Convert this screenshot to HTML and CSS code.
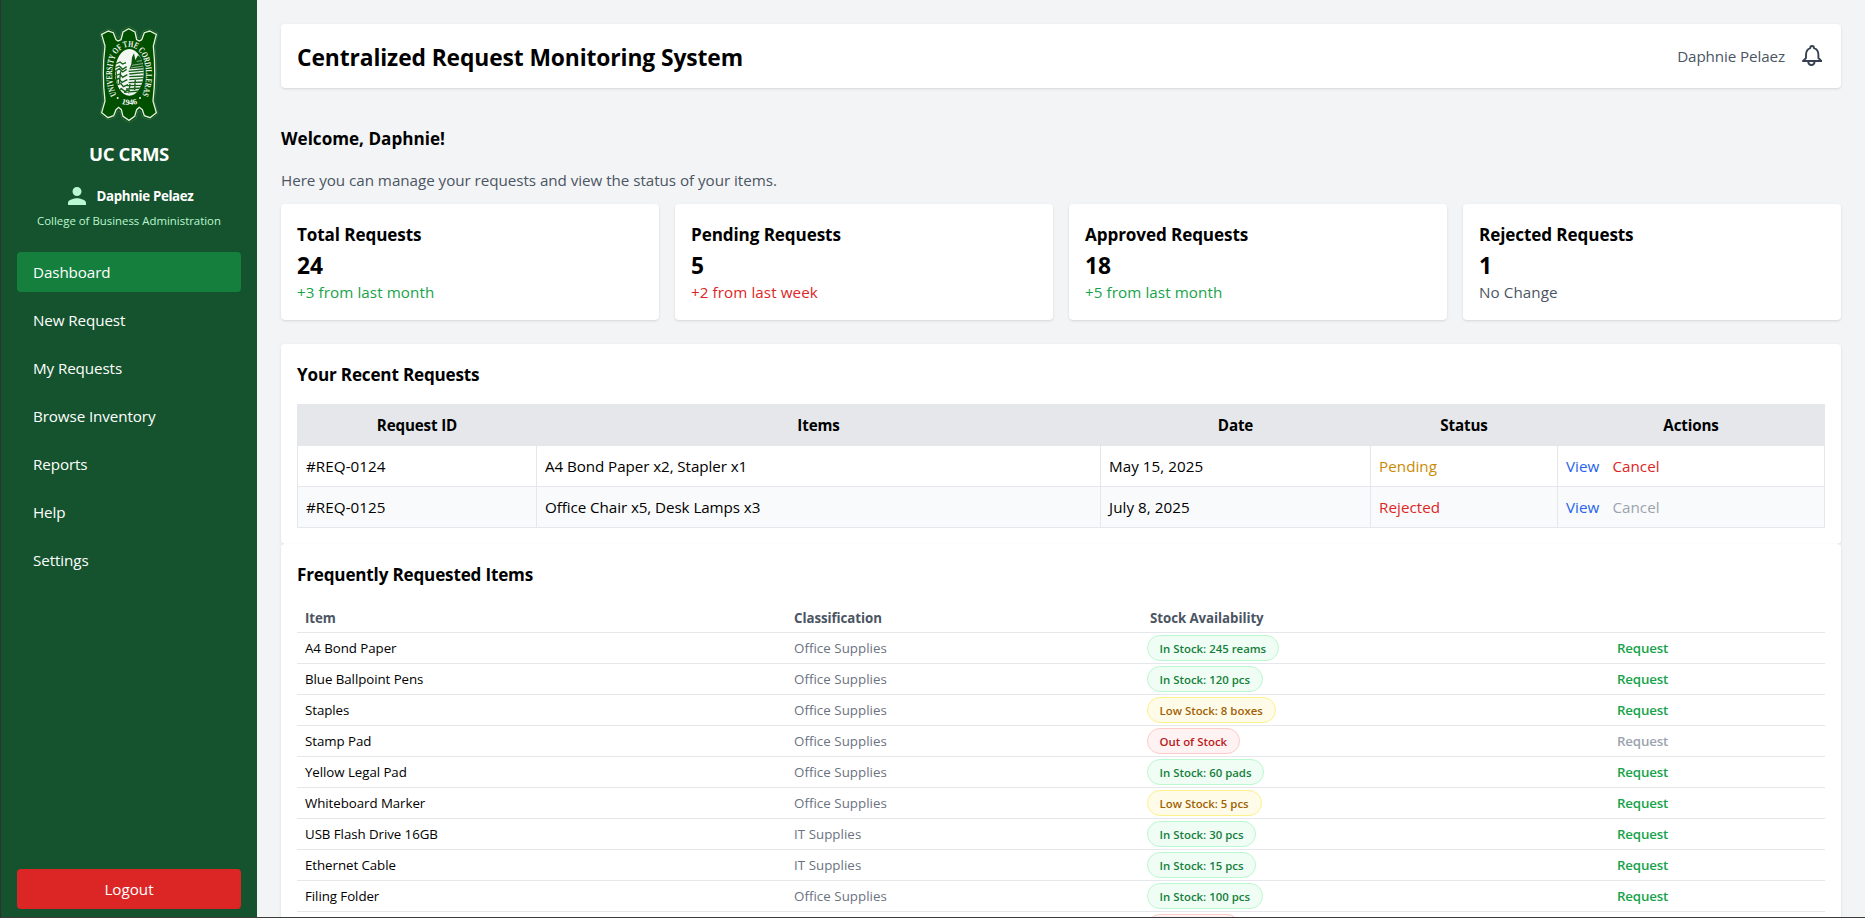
FILE: index.html
```html
<!DOCTYPE html>
<html lang="en">
<head>
<meta charset="utf-8">
<title>UC CRMS</title>
<link rel="stylesheet" href="styles.css">
</head>
<body>
<div class="app">
  <aside class="sidebar">
    <svg class="logo" viewBox="295 75 180 297">
      <defs>
        <path id="arc" d="M348 285 C329 250 330 190 350 160 C368 134 402 134 420 160 C440 190 441 250 424 285"/>
        <path id="arc2" d="M354 308 Q385 322 418 308"/>
        <clipPath id="oval"><ellipse cx="386" cy="217" rx="43" ry="70"/></clipPath>
      </defs>
      <path class="crest-edge" d="M298 99 L323 87 L342 93 L350 114 L357 114 L363 91 L384 79 L407 91 L411 114 L419 114 L427 93 L447 87 L472 99 L463 138 Q472 220 462 303 L472 342 L448 360 L426 352 L420 333 L412 333 L407 355 L385 368 L363 355 L358 333 L350 333 L344 352 L322 360 L298 342 L308 303 Q298 220 308 138 Z"/>
      <path class="crest" d="M303 103 L323 93 L338 98 L346 119 L352 123 L361 119 L367 96 L384 86 L403 96 L408 119 L416 123 L423 119 L431 98 L447 93 L467 103 L458 138 Q467 220 457 303 L467 338 L448 353 L431 347 L425 329 L416 322 L408 329 L402 349 L385 361 L367 349 L362 329 L354 322 L346 329 L339 347 L322 353 L303 338 L313 303 Q303 220 313 138 Z"/>
      <g clip-path="url(#oval)">
        <rect class="pale" x="340" y="140" width="90" height="150"/>
        <path class="dark" d="M386 208 L392 192 L394 172 L400 160 L404 180 L412 166 L430 180 L430 205 Z"/>
        <path class="hatch" d="M346 192 l12 -6 l8 6 l10 -4 M342 204 l14 -6 l10 10 l12 -8 M342 214 l14 -8 l10 10 l12 -8 M342 228 l16 -6 l8 10 l14 -8 M342 243 l12 -8 l10 12 l16 -8 M344 258 l16 -8 l8 10 l14 -6 M350 274 l12 -8 l10 8 l12 -4 M384 214 L430 210 M386 222 L430 218 M386 230 L430 228 M386 239 L430 236 M384 248 L430 246 M380 257 L428 256 M376 267 L424 264 M370 277 L416 273 M360 214 L356 250 M346 210 L350 262 M388 252 L384 280 M404 236 L402 270"/>
        <path class="sky" d="M390 204 L430 198 M394 196 L430 190 M408 184 L424 182"/>
      </g>
      <text class="crest-text"><textPath href="#arc" textLength="342" lengthAdjust="spacingAndGlyphs">UNIVERSITY OF THE CORDILLERAS</textPath></text>
      <text class="crest-text year"><textPath href="#arc2" textLength="50" startOffset="8" lengthAdjust="spacingAndGlyphs">1946</textPath></text>
      <circle class="pale" cx="351" cy="294" r="3"/><circle class="pale" cx="418" cy="294" r="3"/>
    </svg>
    <h1 class="brand">UC CRMS</h1>
    <div class="user">
      <svg class="user-icon" viewBox="4 4 16 16"><path d="M12 12c2.21 0 4-1.79 4-4s-1.79-4-4-4-4 1.79-4 4 1.79 4 4 4zm0 2c-2.67 0-8 1.34-8 4v2h16v-2c0-2.66-5.33-4-8-4z"/></svg>
      <span>Daphnie Pelaez</span>
    </div>
    <p class="college">College of Business Administration</p>
    <nav class="nav">
      <a class="active">Dashboard</a>
      <a>New Request</a>
      <a>My Requests</a>
      <a>Browse Inventory</a>
      <a>Reports</a>
      <a>Help</a>
      <a>Settings</a>
    </nav>
    <button class="logout">Logout</button>
  </aside>
  <main class="main">
    <header class="header">
      <h2 class="title">Centralized Request Monitoring System</h2>
      <div class="account">
        <span>Daphnie Pelaez</span>
        <svg class="bell" viewBox="10 14 24 24"><path d="M12.2 31 H32 M13.4 30.6 L16 28 V25 C16 21 18 19 20.2 18.2 C20.2 15.2 24 15.2 24 18.2 C26.4 19 28.4 21 28.4 25 V28 L31 30.6 M18.2 31.5 C18.4 36.2 24.4 36.2 24.6 31.5"/></svg>
      </div>
    </header>
    <h3 class="heading welcome">Welcome, Daphnie!</h3>
    <p class="intro">Here you can manage your requests and view the status of your items.</p>
    <section class="stats">
      <div class="card stat"><h3 class="heading">Total Requests</h3><p class="num">24</p><p class="up">+3 from last month</p></div>
      <div class="card stat"><h3 class="heading">Pending Requests</h3><p class="num">5</p><p class="down">+2 from last week</p></div>
      <div class="card stat"><h3 class="heading">Approved Requests</h3><p class="num">18</p><p class="up">+5 from last month</p></div>
      <div class="card stat"><h3 class="heading">Rejected Requests</h3><p class="num">1</p><p class="same">No Change</p></div>
    </section>
    <section class="card">
      <h3 class="heading">Your Recent Requests</h3>
      <table class="recent">
        <colgroup><col class="c-id"><col class="c-items"><col class="c-date"><col class="c-status"><col></colgroup>
        <thead><tr><th>Request ID</th><th>Items</th><th>Date</th><th>Status</th><th>Actions</th></tr></thead>
        <tbody>
          <tr><td>#REQ-0124</td><td class="desc">A4 Bond Paper x2, Stapler x1</td><td>May 15, 2025</td><td class="pending">Pending</td><td><a class="view">View</a><a class="cancel">Cancel</a></td></tr>
          <tr><td>#REQ-0125</td><td class="desc">Office Chair x5, Desk Lamps x3</td><td>July 8, 2025</td><td class="rejected">Rejected</td><td><a class="view">View</a><a class="cancel off">Cancel</a></td></tr>
        </tbody>
      </table>
    </section>
    <section class="card">
      <h3 class="heading">Frequently Requested Items</h3>
      <div class="items">
        <div class="row head"><span>Item</span><span>Classification</span><span>Stock Availability</span><span></span></div>
        <div class="row"><span>A4 Bond Paper</span><span class="class">Office Supplies</span><span><i class="pill in">In Stock: 245 reams</i></span><a class="req">Request</a></div>
        <div class="row"><span>Blue Ballpoint Pens</span><span class="class">Office Supplies</span><span><i class="pill in">In Stock: 120 pcs</i></span><a class="req">Request</a></div>
        <div class="row"><span>Staples</span><span class="class">Office Supplies</span><span><i class="pill low">Low Stock: 8 boxes</i></span><a class="req">Request</a></div>
        <div class="row"><span>Stamp Pad</span><span class="class">Office Supplies</span><span><i class="pill out">Out of Stock</i></span><a class="req off">Request</a></div>
        <div class="row"><span>Yellow Legal Pad</span><span class="class">Office Supplies</span><span><i class="pill in">In Stock: 60 pads</i></span><a class="req">Request</a></div>
        <div class="row"><span>Whiteboard Marker</span><span class="class">Office Supplies</span><span><i class="pill low">Low Stock: 5 pcs</i></span><a class="req">Request</a></div>
        <div class="row"><span>USB Flash Drive 16GB</span><span class="class">IT Supplies</span><span><i class="pill in">In Stock: 30 pcs</i></span><a class="req">Request</a></div>
        <div class="row"><span>Ethernet Cable</span><span class="class">IT Supplies</span><span><i class="pill in">In Stock: 15 pcs</i></span><a class="req">Request</a></div>
        <div class="row"><span>Filing Folder</span><span class="class">Office Supplies</span><span><i class="pill in">In Stock: 100 pcs</i></span><a class="req">Request</a></div>
        <div class="row"><span></span><span></span><span><i class="pill out blank"></i></span><span></span></div>
      </div>
    </section>
  </main>
</div>
</body>
</html>
```
FILE: styles.css
```css
* { box-sizing: border-box; margin: 0; padding: 0; }
body { font: 15.2px/24px "Open Sans", "Noto Sans", sans-serif; letter-spacing: -0.1px; color: #000; background: #fff; height: 918px; overflow: hidden; }
.app { display: flex; width: 1865px; height: 918px; border-left: 1px solid #303030; border-bottom: 1px solid #3c3c3c; overflow: hidden; background: #f3f4f6; }

.sidebar { width: 256px; flex: none; background: #14532d; color: #fff; padding: 25px 16px 8px; display: flex; flex-direction: column; align-items: center; }
.logo { width: 60px; height: 99px; flex: none; margin-right: 1px; }
.crest-edge { fill: #064d0b; stroke: #3b7a45; stroke-width: 2; }
.crest { fill: #005000; stroke: #e4efe4; stroke-width: 4; }
.pale { fill: #f2f7f2; }
.dark { fill: #0b560d; }
.hatch { fill: none; stroke: #175f1a; stroke-width: 4; }
.sky { fill: none; stroke: #cfe0cf; stroke-width: 2; }
.crest-text { font: bold 27px "Liberation Serif", serif; letter-spacing: 0; fill: #f2f7f2; }
.year { font-size: 24px; }
.brand { font-size: 18.6px; line-height: 28px; font-weight: 700; letter-spacing: -0.4px; margin-top: 16px; }
.user { display: flex; align-items: center; gap: 11px; margin: 18px 0 0 3px; font-size: 13.3px; line-height: 20px; font-weight: 700; letter-spacing: -0.35px; }
.user-icon { width: 18px; height: 18px; fill: #bbf7d0; }
.college { font-size: 11.4px; line-height: 16px; letter-spacing: 0; color: #bbf7d0; margin-top: 7px; }
.nav { align-self: stretch; display: flex; flex-direction: column; gap: 8px; margin-top: 23px; }
.nav a { padding: 8px 16px; border-radius: 4px; }
.nav .active { background: #15803d; }
.logout { margin-top: auto; width: 100%; height: 40px; border: 0; border-radius: 4px; background: #dc2626; color: #fff; font: inherit; }

.main { flex: 1; padding: 24px 24px 0; min-width: 0; }
.header, .card { background: #fff; border-radius: 4px; box-shadow: 0 1px 3px rgba(0,0,0,.1), 0 1px 2px -1px rgba(0,0,0,.1); }
.header { display: flex; justify-content: space-between; align-items: center; height: 64px; padding: 0 17px 0 16px; margin-bottom: 36px; }
.title { font-size: 22.8px; line-height: 32px; font-weight: 700; padding-top: 3px; }
.account { display: flex; align-items: center; gap: 15px; color: #4b5563; }
.bell { width: 24px; height: 24px; fill: none; stroke: #374151; stroke-width: 1.9; stroke-linejoin: round; }
.heading { font-size: 17.1px; line-height: 28px; height: 28px; padding-top: 1px; font-weight: 700; letter-spacing: -0.18px; }
.welcome { letter-spacing: 0; }
.intro { margin: 16px 0 12px; color: #4b5563; letter-spacing: -0.04px; }
.card { padding: 16px; }
.stats { display: grid; grid-template-columns: repeat(4, 1fr); gap: 16px; margin-bottom: 24px; letter-spacing: 0.08px; }
.stats .heading { letter-spacing: -0.1px; }
.num { font-size: 22.8px; line-height: 32px; height: 32px; padding-top: 2px; font-weight: 700; }
.up { color: #16a34a; }
.down { color: #dc2626; }
.same { color: #4b5563; }

.recent { width: 1528px; margin-top: 16px; table-layout: fixed; border-collapse: collapse; letter-spacing: 0.05px; }
.recent th, .recent td { border: 1px solid #e5e7eb; padding: 8px; height: 41px; }
.recent th { background: #e5e7eb; font-weight: 700; letter-spacing: -0.15px; }
.recent tbody tr:nth-child(2) { background: #f9fafb; }
.recent .desc { letter-spacing: -0.08px; }
.c-id { width: 239px; }
.c-items { width: 564px; }
.c-date { width: 270px; }
.c-status { width: 187px; }
.pending { color: #ca8a04; }
.rejected, .cancel { color: #dc2626; }
.view { color: #2563eb; margin-right: 13px; }
.recent .off, .items .off { color: #9ca3af; }

.items { margin-top: 16px; font-size: 13.3px; line-height: 20px; letter-spacing: -0.06px; }
.row { display: grid; grid-template-columns: 489px 356px 467px 1fr; align-items: center; height: 31px; border-bottom: 1px solid #e5e7eb; }
.row > * { padding-left: 8px; }
.head { height: 29px; font-weight: 700; color: #4b5563; }
.class { color: #6b7280; letter-spacing: 0.05px; }
.pill { display: block; width: max-content; height: 26px; margin-left: -3px; padding: 0 12px 0 11.5px; border: 1px solid; border-radius: 13px; font-size: 11.4px; line-height: 25px; font-style: normal; font-weight: 600; letter-spacing: 0; }
.in { background: #f0fdf4; border-color: #bbf7d0; color: #15803d; }
.low { background: #fefce8; border-color: #fef08a; color: #a16207; }
.out { background: #fef2f2; border-color: #fecaca; color: #b91c1c; }
.blank { width: 93px; }
.req { color: #16a34a; font-weight: 600; letter-spacing: -0.15px; }
```
